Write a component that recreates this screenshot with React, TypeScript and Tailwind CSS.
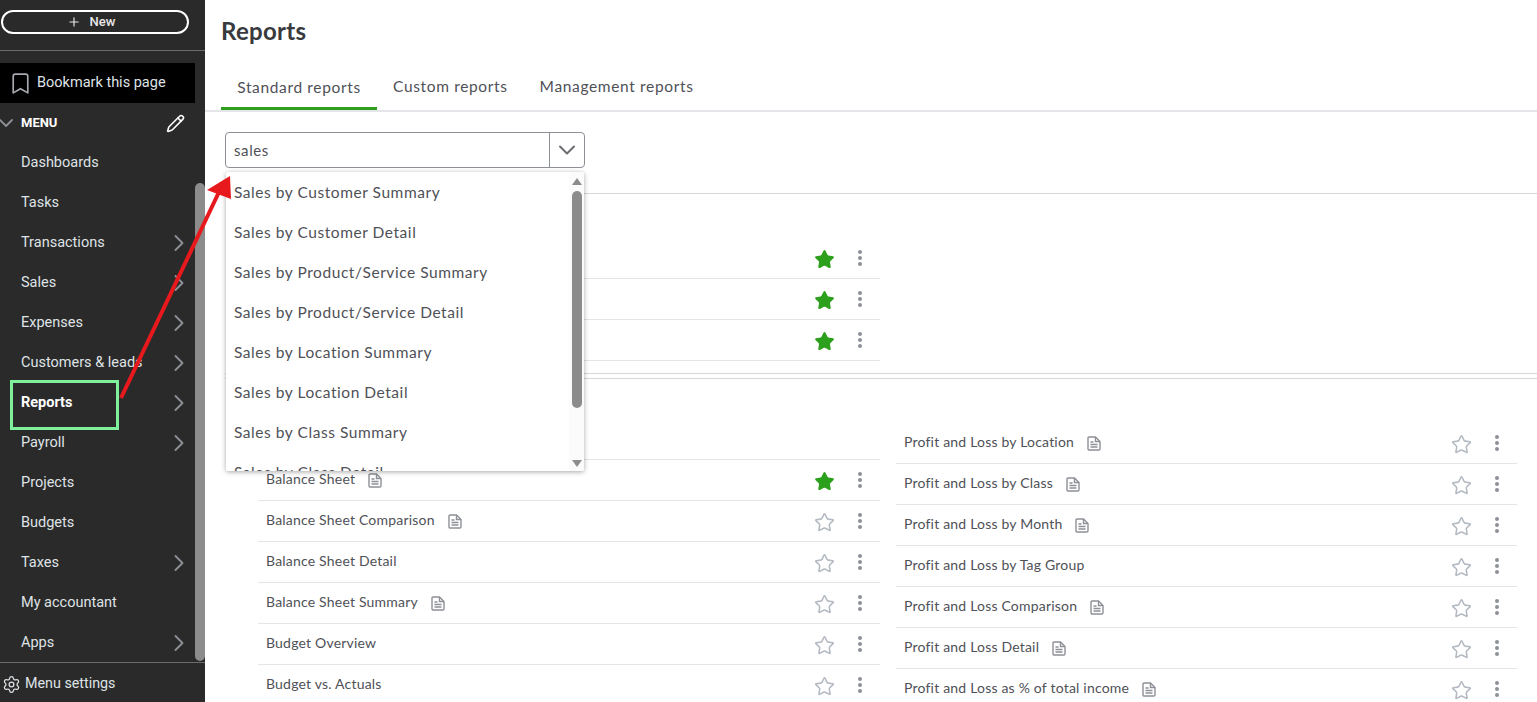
import { Bookmark, ChevronDown, ChevronRight, Pencil, Plus, Settings, Star } from "lucide-react"

const menuItems = [
  { label: "Dashboards" },
  { label: "Tasks" },
  { label: "Transactions", more: true },
  { label: "Sales", more: true },
  { label: "Expenses", more: true },
  { label: "Customers & leads", more: true },
  { label: "Reports", more: true, active: true },
  { label: "Payroll", more: true },
  { label: "Projects" },
  { label: "Budgets" },
  { label: "Taxes", more: true },
  { label: "My accountant" },
  { label: "Apps", more: true },
]

const options = [
  "Sales by Customer Summary",
  "Sales by Customer Detail",
  "Sales by Product/Service Summary",
  "Sales by Product/Service Detail",
  "Sales by Location Summary",
  "Sales by Location Detail",
  "Sales by Class Summary",
  "Sales by Class Detail",
]

const leftRows = [
  { label: "", hidden: true },
  { label: "Balance Sheet", doc: true, starred: true },
  { label: "Balance Sheet Comparison", doc: true },
  { label: "Balance Sheet Detail" },
  { label: "Balance Sheet Summary", doc: true },
  { label: "Budget Overview" },
  { label: "Budget vs. Actuals" },
]

const rightRows = [
  { label: "Profit and Loss by Location", doc: true },
  { label: "Profit and Loss by Class", doc: true },
  { label: "Profit and Loss by Month", doc: true },
  { label: "Profit and Loss by Tag Group" },
  { label: "Profit and Loss Comparison", doc: true },
  { label: "Profit and Loss Detail", doc: true },
  { label: "Profit and Loss as % of total income", doc: true },
]

type RowProps = {
  label?: string
  doc?: boolean
  starred?: boolean
  hidden?: boolean
}

function DocIcon() {
  return (
    <svg className="ml-[13px] shrink-0" width="14" height="15" viewBox="0 0 14 15" fill="none" stroke="#8d9096" strokeWidth="1.4">
      <path d="M1 2.2C1 1.5 1.5 1 2.2 1H8.5L13 5.5V12.8C13 13.5 12.5 14 11.8 14H2.2C1.5 14 1 13.5 1 12.8Z" />
      <path d="M8.5 1V5.5H13" />
      <path d="M3.5 6H6.5M3.5 8.5H10.5M3.5 11H10.5" />
    </svg>
  )
}

function ReportRow({ label, doc, starred, hidden }: RowProps) {
  return (
    <div className="flex h-[41px] shrink-0 items-center border-b border-[#e3e5e8] pl-2 pr-[14px]">
      <span className="mb-[3px] text-[14px] tracking-[0.2px] text-[#4f5157]">{label}</span>
      {doc && <DocIcon />}
      {!hidden && (
        <div className="ml-auto flex items-center gap-[19px]">
          {starred ? (
            <Star className="mt-[2px] h-[21px] w-[21px] fill-[#2ca01c] text-[#2ca01c]" strokeWidth={1.5} />
          ) : (
            <Star className="mt-[2px] h-[21px] w-[21px] text-[#b4bac2]" strokeWidth={1.8} />
          )}
          <Kebab />
        </div>
      )}
    </div>
  )
}

function Kebab() {
  return (
    <div className="flex w-3 flex-col items-center gap-[2px]">
      <span className="h-1 w-1 rounded-full bg-[#8d9096]" />
      <span className="h-1 w-1 rounded-full bg-[#8d9096]" />
      <span className="h-1 w-1 rounded-full bg-[#8d9096]" />
    </div>
  )
}

function Sidebar() {
  return (
    <aside className="relative flex h-[702px] w-[205px] shrink-0 flex-col bg-[#2a2a2a] font-['Roboto',sans-serif] text-[14.5px] text-[#dfe3e6]">
      <div className="h-[51px] shrink-0 border-b border-[#6b6c72] pl-[1px] pr-[16px] pt-[10px]">
        <button className="flex h-[24px] w-full items-center justify-center gap-[9px] rounded-full border-2 border-white pr-2 text-[13px] font-medium text-[#e8e8e8]">
          <Plus className="h-[14px] w-[14px]" strokeWidth={2} />
          New
        </button>
      </div>
      <div className="mt-3 flex h-10 w-[195px] shrink-0 items-center gap-[4px] bg-black pl-2 text-[14.5px]">
        <Bookmark className="h-[25px] w-[25px] text-[#a8abb0]" strokeWidth={1.6} />
        Bookmark this page
      </div>
      <div className="flex min-h-0 flex-1">
        <div className="min-w-0 flex-1">
          <div className="flex h-[39px] items-center pr-[10px] pt-[1px] text-[13px] font-bold text-white">
            <ChevronDown className="-ml-[6px] h-[24px] w-[24px] shrink-0 text-[#8d9096]" strokeWidth={1.8} />
            <span className="ml-[3px]">MENU</span>
            <Pencil className="ml-auto h-[19px] w-[19px] text-white" strokeWidth={2} />
          </div>
          <nav className="mt-[1px]">
            {menuItems.map((item) => (
              <div key={item.label} className="flex h-10 items-center pl-[21px] pr-[2px]">
                <span className={item.active ? "font-bold text-white" : ""}>{item.label}</span>
                {item.more && <ChevronRight className="ml-auto h-[28px] w-[28px] text-[#8d9096]" strokeWidth={1.6} />}
              </div>
            ))}
          </nav>
        </div>
        <div className="flex w-[10px] shrink-0 flex-col pt-[80px] pb-[1px]">
          <div className="h-full rounded-t-[6px] rounded-b-[6px] bg-[#8c8c8c]" />
        </div>
      </div>
      <div className="flex h-[40px] shrink-0 items-center gap-[4px] border-t border-[#6b6c72] pl-[2px] pt-[3px] text-[14.3px]">
        <Settings className="h-[19px] w-[19px] text-[#dfe3e6]" strokeWidth={1.6} />
        Menu settings
      </div>
    </aside>
  )
}

function ReportSearch() {
  return (
    <div className="relative ml-5 h-[81px] w-[360px] shrink-0 pt-[20px]">
      <div className="flex h-[36px] items-center rounded-[4px] border border-[#8d9096] bg-white">
        <span className="flex-1 pl-2 pt-px text-[15px] tracking-[0.6px] text-[#4f5157]">sales</span>
        <span className="flex h-full w-[35px] items-center justify-center border-l border-[#8d9096]">
          <ChevronDown className="h-[28px] w-[28px] text-[#6b6c72]" strokeWidth={1.7} />
        </span>
      </div>
      <div className="absolute left-px top-[60px] z-10 flex h-[299px] w-[358px] overflow-hidden rounded-[2px] bg-white shadow-[0_1px_5px_rgba(0,0,0,0.35)]">
        <ul className="min-w-0 flex-1">
          {options.map((option) => (
            <li key={option} className="flex h-10 items-center whitespace-nowrap pl-2 pt-[2px] text-[15.5px] tracking-[0.55px] text-[#4f5157]">
              {option}
            </li>
          ))}
        </ul>
        <div className="flex w-[15px] shrink-0 flex-col items-center bg-[#fbfbfb] pt-[6px] pl-px">
          <span className="h-0 w-0 border-x-[5px] border-b-[7px] border-x-transparent border-b-[#8c8c8c]" />
          <span className="mt-[6px] h-[217px] w-[10px] rounded-[5px] bg-[#8c8c8c]" />
          <span className="mt-auto mb-[4px] h-0 w-0 border-x-[5px] border-t-[7px] border-x-transparent border-t-[#8c8c8c]" />
        </div>
      </div>
    </div>
  )
}

export default function App() {
  return (
    <div className="relative flex h-[702px] w-[1537px] overflow-hidden bg-white font-['Lato',sans-serif] text-[#393a3d]">
      <Sidebar />
      <main className="flex min-w-0 flex-1 flex-col">
        <h1 className="h-[63px] shrink-0 pl-4 pt-[13px] text-[24px] font-bold leading-9 tracking-[0.3px] text-[#393a3d]">Reports</h1>
        <div className="flex h-[49px] shrink-0 border-b-2 border-[#e3e5e8] pl-4 text-[15.5px] tracking-[0.65px] text-[#4f5157]">
          <div className="flex h-[47px] w-[156px] items-center justify-center border-b-[3px] border-[#2ca01c] pt-[5px]">Standard reports</div>
          <div className="flex h-[47px] items-center justify-center px-4 pt-[1px]">Custom reports</div>
          <div className="flex h-[47px] items-center justify-center px-4 pt-[1px]">Management reports</div>
        </div>
        <ReportSearch />

        <section className="ml-5 h-[181px] shrink-0 border-y border-[#d4d7dc] pt-[44px]">
          <div className="ml-[33px] w-[622px]">
            {[0, 1, 2].map((n) => (
              <ReportRow key={n} starred />
            ))}
          </div>
        </section>

        <section className="mt-1 ml-5 flex min-h-0 flex-1 gap-4 border-t border-[#d4d7dc] pl-[33px]">
          <div className="flex w-[622px] shrink-0 flex-col pt-[40px]">
            {leftRows.map((row, i) => (
              <ReportRow key={i} {...row} />
            ))}
          </div>
          <div className="flex w-[621px] shrink-0 flex-col pt-[44px]">
            {rightRows.map((row) => (
              <ReportRow key={row.label} {...row} />
            ))}
          </div>
        </section>
      </main>

      <div className="absolute left-[10px] top-[380px] z-20 h-[50px] w-[109px] border-[3px] border-[#7ff09b]" />
      <svg className="absolute left-[110px] top-[170px] z-20" width="130" height="235" viewBox="0 0 130 235">
        <line x1="11" y1="228" x2="109" y2="22" stroke="#e8191c" strokeWidth="4" />
        <polygon points="120,6 121,29 97,20" fill="#e8191c" />
      </svg>
    </div>
  )
}
